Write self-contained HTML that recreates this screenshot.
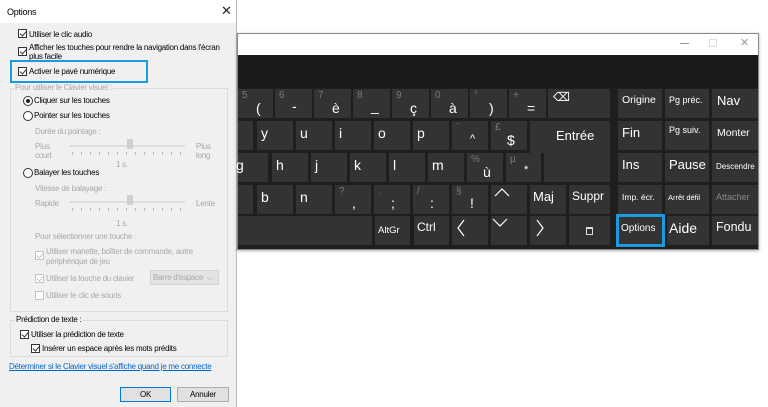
<!DOCTYPE html>
<html><head><meta charset="utf-8"><style>
*{margin:0;padding:0;box-sizing:border-box}
body{width:768px;height:407px;background:#fff;position:relative;overflow:hidden;font-family:"Liberation Sans",sans-serif}
.a{position:absolute;white-space:nowrap}
.t{font-size:8px;color:#000;letter-spacing:-0.25px}
.g{color:#a8a8a8}
.cb{position:absolute;width:9px;height:9px;border:1px solid #333;background:#fff}
.cb.on::after{content:"";position:absolute;left:2px;top:0px;width:3px;height:5px;border:solid #333;border-width:0 1px 1px 0;transform:rotate(40deg)}
.cb.dis{border-color:#c4c4c4}.cb.dis::after{border-color:#c4c4c4}
.rd{position:absolute;width:10px;height:10px;border:1px solid #333;border-radius:50%;background:#fff}
.rd.on::after{content:"";position:absolute;left:2px;top:2px;width:4px;height:4px;border-radius:50%;background:#222}
.k{position:absolute;background:#333;color:#fff;height:29px}
.k .s{position:absolute;left:4px;top:1px;font-size:10px;color:#7a7a7a}
.k .m{position:absolute;font-size:14px}
.k .w{position:absolute;left:5px;top:6px;font-size:11.5px}
</style></head><body>
<!-- dialog -->
<div class="a" style="left:0;top:0;width:237px;height:407px;background:#f0f0f0;border-right:1px solid #b9b9b9"></div>
<div class="a" style="left:0;top:0;width:236px;height:23px;background:#fff"></div>
<div class="a t" style="left:7px;top:7px;font-size:9px">Options</div>
<div class="a" style="left:221px;top:3px;font-size:13px;color:#222">✕</div>

<div class="cb on" style="left:18px;top:29px"></div><div class="a t" style="left:29px;top:30px">Utiliser le clic audio</div>
<div class="cb on" style="left:18px;top:47px"></div><div class="a t" style="left:29px;top:43px;line-height:9px">Afficher les touches pour rendre la navigation dans l'écran<br>plus facile</div>
<div class="a" style="left:10px;top:60px;width:138px;height:23px;border:2px solid #1a9be0"></div>
<div class="cb on" style="left:18px;top:67px"></div><div class="a t" style="left:29px;top:67px">Activer le pavé numérique</div>

<div class="a" style="left:10px;top:88px;width:218px;height:224px;border:1px solid #dcdcdc"></div>
<div class="a t g" style="left:14px;top:83px;background:#f0f0f0;padding:0 1px">Pour utiliser le Clavier visuel :</div>
<div class="rd on" style="left:23px;top:96px"></div><div class="a t" style="left:34px;top:96px">Cliquer sur les touches</div>
<div class="rd" style="left:23px;top:111px"></div><div class="a t" style="left:34px;top:111px">Pointer sur les touches</div>
<div class="a t g" style="left:35px;top:127px">Durée du pointage :</div>
<div class="a t g" style="left:35px;top:142px;line-height:9px">Plus<br>court</div>
<div class="a t g" style="left:196px;top:142px;line-height:9px">Plus<br>long</div>
<div class="a" style="left:70px;top:145px;width:115px;height:2px;background:#dcdcdc"></div>
<div class="a" style="left:127px;top:139px;width:6px;height:10px;background:#cfcfcf"></div>
<div class="a" style="left:72px;top:152px;width:112px;height:3px;background:repeating-linear-gradient(90deg,#bbb 0 1px,transparent 1px 9px)"></div>
<div class="a t g" style="left:116px;top:160px">1 s.</div>
<div class="rd" style="left:23px;top:168px"></div><div class="a t" style="left:34px;top:168px">Balayer les touches</div>
<div class="a t g" style="left:35px;top:184px">Vitesse de balayage :</div>
<div class="a t g" style="left:35px;top:199px">Rapide</div>
<div class="a t g" style="left:196px;top:199px">Lente</div>
<div class="a" style="left:70px;top:201px;width:115px;height:2px;background:#dcdcdc"></div>
<div class="a" style="left:127px;top:195px;width:6px;height:10px;background:#cfcfcf"></div>
<div class="a" style="left:72px;top:208px;width:112px;height:3px;background:repeating-linear-gradient(90deg,#bbb 0 1px,transparent 1px 9px)"></div>
<div class="a t g" style="left:116px;top:219px">1 s.</div>
<div class="a t g" style="left:35px;top:232px">Pour sélectionner une touche :</div>
<div class="cb on dis" style="left:35px;top:251px"></div><div class="a t g" style="left:46px;top:247px;line-height:10px">Utiliser manette, boîtier de commande, autre<br>périphérique de jeu</div>
<div class="cb on dis" style="left:35px;top:274px"></div><div class="a t g" style="left:46px;top:274px">Utiliser la touche du clavier</div>
<div class="a" style="left:150px;top:270px;width:69px;height:15px;background:#e3e3e3;border:1px solid #d5d5d5"></div>
<div class="a t g" style="left:153px;top:273px">Barre d'espace &nbsp;⌵</div>
<div class="cb dis" style="left:35px;top:291px"></div><div class="a t g" style="left:46px;top:291px">Utiliser le clic de souris</div>

<div class="a" style="left:10px;top:320px;width:218px;height:37px;border:1px solid #dcdcdc"></div>
<div class="a t" style="left:15px;top:315px;background:#f0f0f0;padding:0 1px">Prédiction de texte :</div>
<div class="cb on" style="left:20px;top:330px"></div><div class="a t" style="left:31px;top:330px">Utiliser la prédiction de texte</div>
<div class="cb on" style="left:31px;top:344px"></div><div class="a t" style="left:42px;top:344px">Insérer un espace après les mots prédits</div>
<div class="a t" style="left:9px;top:362px;color:#0066cc;text-decoration:underline">Déterminer si le Clavier visuel s'affiche quand je me connecte</div>
<div class="a" style="left:120px;top:387px;width:51px;height:15px;background:#e1e1e1;border:1px solid #0078d7"></div>
<div class="a t" style="left:140px;top:390px">OK</div>
<div class="a" style="left:177px;top:387px;width:52px;height:15px;background:#e1e1e1;border:1px solid #adadad"></div>
<div class="a t" style="left:190px;top:390px">Annuler</div>

<!-- keyboard window -->
<div class="a" style="left:237px;top:33px;width:522px;height:217px;background:#1e1e1e;border:1px solid #888;box-shadow:0 1px 3px rgba(0,0,0,.3)"></div>
<div class="a" style="left:238px;top:34px;width:520px;height:21px;background:#fff"></div>
<div class="a" style="left:680px;top:43px;width:9px;height:1px;background:#999"></div>
<div class="a" style="left:709px;top:39px;width:8px;height:8px;border:1px solid #ddd"></div>
<div class="a" style="left:740px;top:36px;font-size:11px;color:#999">✕</div>
<div class="a" style="left:238px;top:55px;width:520px;height:33px;background:#1a1a1a"></div>

<!-- row1 -->
<div class="k" style="left:238px;top:89px;width:35px"><span class="s">5</span><span class="m" style="left:18px;top:11px">(</span></div>
<div class="k" style="left:275px;top:89px;width:37px"><span class="s">6</span><span class="m" style="left:17px;top:9px">-</span></div>
<div class="k" style="left:314px;top:89px;width:37px"><span class="s">7</span><span class="m" style="left:18px;top:11px">è</span></div>
<div class="k" style="left:353px;top:89px;width:37px"><span class="s">8</span><span class="m" style="left:18px;top:9px">_</span></div>
<div class="k" style="left:392px;top:89px;width:37px"><span class="s">9</span><span class="m" style="left:18px;top:11px">ç</span></div>
<div class="k" style="left:431px;top:89px;width:37px"><span class="s">0</span><span class="m" style="left:18px;top:11px">à</span></div>
<div class="k" style="left:470px;top:89px;width:37px"><span class="s">°</span><span class="m" style="left:19px;top:11px">)</span></div>
<div class="k" style="left:509px;top:89px;width:37px"><span class="s">+</span><span class="m" style="left:18px;top:11px">=</span></div>
<div class="k" style="left:548px;top:89px;width:62px"><span class="w" style="top:1px;left:5px;font-size:12px">⌫</span></div>
<div class="k" style="left:618px;top:89px;width:44px"><span class="w" style="left:4px;top:5px;font-size:10.5px">Origine</span></div>
<div class="k" style="left:665px;top:89px;width:44px"><span class="w" style="left:4px;top:6px;font-size:9px">Pg préc.</span></div>
<div class="k" style="left:712px;top:89px;width:46px"><span class="w" style="left:5px;top:4px;font-size:13px">Nav</span></div>
<!-- row2 -->
<div class="k" style="left:238px;top:121px;width:15px"></div>
<div class="k" style="left:257px;top:121px;width:36px"><span class="m" style="left:4px;top:4px">y</span></div>
<div class="k" style="left:296px;top:121px;width:36px"><span class="m" style="left:4px;top:4px">u</span></div>
<div class="k" style="left:335px;top:121px;width:36px"><span class="m" style="left:4px;top:4px">i</span></div>
<div class="k" style="left:374px;top:121px;width:36px"><span class="m" style="left:4px;top:4px">o</span></div>
<div class="k" style="left:413px;top:121px;width:36px"><span class="m" style="left:4px;top:4px">p</span></div>
<div class="k" style="left:452px;top:121px;width:36px"><span class="s">¨</span><span class="m" style="left:18px;top:12px;font-size:11px">^</span></div>
<div class="k" style="left:491px;top:121px;width:36px"><span class="s">£</span><span class="m" style="left:16px;top:11px">$</span></div>
<div class="k" style="left:530px;top:121px;width:80px;height:32px"><span class="w" style="left:26px;top:7px;font-size:13px">Entrée</span></div>
<div class="k" style="left:544px;top:150px;width:66px;height:32px"></div>
<div class="k" style="left:618px;top:121px;width:44px"><span class="w" style="left:4px;top:4px;font-size:13px">Fin</span></div>
<div class="k" style="left:665px;top:121px;width:44px"><span class="w" style="left:4px;top:4px;font-size:9px">Pg suiv.</span></div>
<div class="k" style="left:712px;top:121px;width:46px"><span class="w" style="left:5px;top:6px;font-size:10.5px">Monter</span></div>
<!-- row3 -->
<div class="k" style="left:238px;top:153px;width:30px"><span class="m" style="left:-2px;top:4px">g</span></div>
<div class="k" style="left:272px;top:153px;width:36px"><span class="m" style="left:4px;top:4px">h</span></div>
<div class="k" style="left:311px;top:153px;width:36px"><span class="m" style="left:4px;top:4px">j</span></div>
<div class="k" style="left:350px;top:153px;width:36px"><span class="m" style="left:4px;top:4px">k</span></div>
<div class="k" style="left:389px;top:153px;width:36px"><span class="m" style="left:4px;top:4px">l</span></div>
<div class="k" style="left:428px;top:153px;width:36px"><span class="m" style="left:4px;top:4px">m</span></div>
<div class="k" style="left:467px;top:153px;width:36px"><span class="s">%</span><span class="m" style="left:16px;top:11px">ù</span></div>
<div class="k" style="left:506px;top:153px;width:35px"><span class="s">µ</span><span class="m" style="left:18px;top:11px;font-size:11px">*</span></div>
<div class="k" style="left:618px;top:153px;width:44px"><span class="w" style="left:4px;top:4px;font-size:13px">Ins</span></div>
<div class="k" style="left:665px;top:153px;width:44px"><span class="w" style="left:4px;top:4px;font-size:13px">Pause</span></div>
<div class="k" style="left:712px;top:153px;width:46px"><span class="w" style="left:4px;top:9px;font-size:8px">Descendre</span></div>
<!-- row4 -->
<div class="k" style="left:238px;top:185px;width:15px"></div>
<div class="k" style="left:257px;top:185px;width:36px"><span class="m" style="left:4px;top:4px">b</span></div>
<div class="k" style="left:296px;top:185px;width:36px"><span class="m" style="left:4px;top:4px">n</span></div>
<div class="k" style="left:335px;top:185px;width:36px"><span class="s">?</span><span class="m" style="left:17px;top:10px">,</span></div>
<div class="k" style="left:374px;top:185px;width:36px"><span class="s">.</span><span class="m" style="left:17px;top:10px">;</span></div>
<div class="k" style="left:413px;top:185px;width:36px"><span class="s">/</span><span class="m" style="left:17px;top:10px">:</span></div>
<div class="k" style="left:452px;top:185px;width:36px"><span class="s">§</span><span class="m" style="left:18px;top:10px">!</span></div>
<div class="k" style="left:491px;top:185px;width:36px"><svg class="a" style="left:3px;top:2px" width="16" height="10"><path d="M1 9 L8 2 L15 9" stroke="#fff" fill="none" stroke-width="1.2"/></svg></div>
<div class="k" style="left:530px;top:185px;width:36px"><span class="w" style="left:3px;top:4px;font-size:13px">Maj</span></div>
<div class="k" style="left:569px;top:185px;width:41px"><span class="w" style="left:3px;top:4px;font-size:12px">Suppr</span></div>
<div class="k" style="left:618px;top:185px;width:44px"><span class="w" style="left:4px;top:7px;font-size:8.5px">Imp. écr.</span></div>
<div class="k" style="left:665px;top:185px;width:44px"><span class="w" style="left:3px;top:8px;font-size:7.5px">Arrêt défil</span></div>
<div class="k" style="left:712px;top:185px;width:46px"><span class="w" style="left:4px;top:7px;font-size:9px;color:#888">Attacher</span></div>
<!-- row5 -->
<div class="k" style="left:238px;top:216px;width:134px"></div>
<div class="k" style="left:375px;top:216px;width:35px"><span class="w" style="left:3px;top:9px;font-size:9.5px">AltGr</span></div>
<div class="k" style="left:414px;top:216px;width:35px"><span class="w" style="left:3px;top:4px;font-size:12px">Ctrl</span></div>
<div class="k" style="left:452px;top:216px;width:36px"><svg class="a" style="left:4px;top:3px" width="10" height="18"><path d="M8 1 L2 9 L8 17" stroke="#fff" fill="none" stroke-width="1.2"/></svg></div>
<div class="k" style="left:491px;top:216px;width:36px"><svg class="a" style="left:1px;top:2px" width="16" height="10"><path d="M1 1 L8 8 L15 1" stroke="#fff" fill="none" stroke-width="1.2"/></svg></div>
<div class="k" style="left:530px;top:216px;width:36px"><svg class="a" style="left:5px;top:3px" width="10" height="18"><path d="M2 1 L8 9 L2 17" stroke="#fff" fill="none" stroke-width="1.2"/></svg></div>
<div class="k" style="left:569px;top:216px;width:41px"><div class="a" style="left:17px;top:11px;width:7px;height:8px;border:1px solid #ddd;border-top-width:2px"></div></div>
<div class="k" style="left:616px;top:214px;width:49px;height:33px;border:3px solid #1a9be0"><span class="w" style="left:2px;top:6px;font-size:10px">Options</span></div>
<div class="k" style="left:667px;top:216px;width:42px"><span class="w" style="left:2px;top:4px;font-size:14px">Aide</span></div>
<div class="k" style="left:712px;top:216px;width:46px"><span class="w" style="left:4px;top:4px;font-size:12.5px">Fondu</span></div>
</body></html>
